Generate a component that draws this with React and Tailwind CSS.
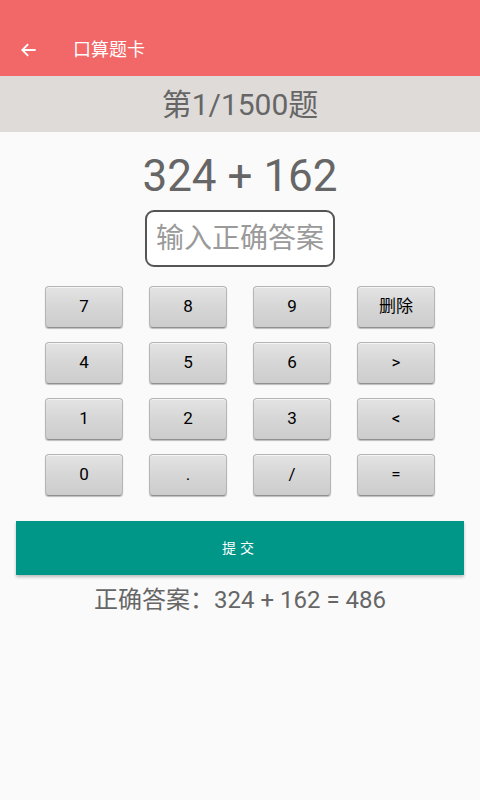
import React, { useState } from "react";

const KEYS = ["7", "8", "9", "删除", "4", "5", "6", ">", "1", "2", "3", "<", "0", ".", "/", "="];

function Key({ label, onPress }) {
  return (
    <button
      type="button"
      onClick={() => onPress(label)}
      className="h-[42px] w-[78px] rounded-[4px] border border-[#b5b5b5] border-b-[#8f8f8f] bg-gradient-to-b from-[#e4e4e4] via-[#d6d6d6] to-[#cdcdcd] text-[17px] text-black shadow-[inset_0_1px_0_#f4f4f4,0_1px_1px_rgba(0,0,0,0.25)]"
    >
      {label}
    </button>
  );
}

export default function App() {
  const [answer, setAnswer] = useState("");

  function press(k) {
    if (k === "删除") setAnswer((a) => a.slice(0, -1));
    else setAnswer((a) => a + k);
  }

  return (
    <div
      className="flex min-h-[800px] w-[480px] flex-col bg-[#fafafa]"
      style={{ fontFamily: 'Roboto, "Noto Sans CJK SC", sans-serif' }}
    >
      <header className="flex h-[76px] items-end bg-[#f26868] pb-[13px] shadow-[0_2px_3px_rgba(0,0,0,0.2)]">
        <svg className="mb-[3px] ml-[19px] h-[20px] w-[20px]" viewBox="0 0 24 24" fill="none" stroke="white" strokeWidth="2.2">
          <path d="M20 12H5M11 5l-7 7 7 7" />
        </svg>
        <div className="ml-[34px] text-[18px] leading-[26px] text-white">口算题卡</div>
      </header>

      <div className="flex h-[56px] items-center justify-center bg-[#dedbd9] text-[30px] text-[#666]">
        第1/1500题
      </div>

      <div className="mt-[18px] text-center text-[44px] leading-[52px] text-[#666]">324 + 162</div>

      <div className="mt-[8px] flex justify-center">
        <input
          value={answer}
          onChange={(e) => setAnswer(e.target.value)}
          placeholder="输入正确答案"
          className="h-[57px] w-[190px] rounded-[9px] border-2 border-[#555] bg-white px-[6px] text-center text-[28px] text-[#444] outline-none placeholder:text-[#9a9a9a]"
        />
      </div>

      <div className="mt-[19px] grid grid-cols-[repeat(4,78px)] justify-center gap-x-[26px] gap-y-[14px]">
        {KEYS.map((k) => (
          <Key key={k} label={k} onPress={press} />
        ))}
      </div>

      <button
        type="button"
        className="mx-[16px] mt-[25px] h-[54px] bg-[#009688] text-[14px] tracking-[4px] text-white shadow-[0_2px_3px_rgba(0,0,0,0.25)]"
      >
        提交
      </button>

      <div className="mt-[9px] text-center text-[24px] leading-[32px] text-[#666]">正确答案：324 + 162 = 486</div>
    </div>
  );
}
